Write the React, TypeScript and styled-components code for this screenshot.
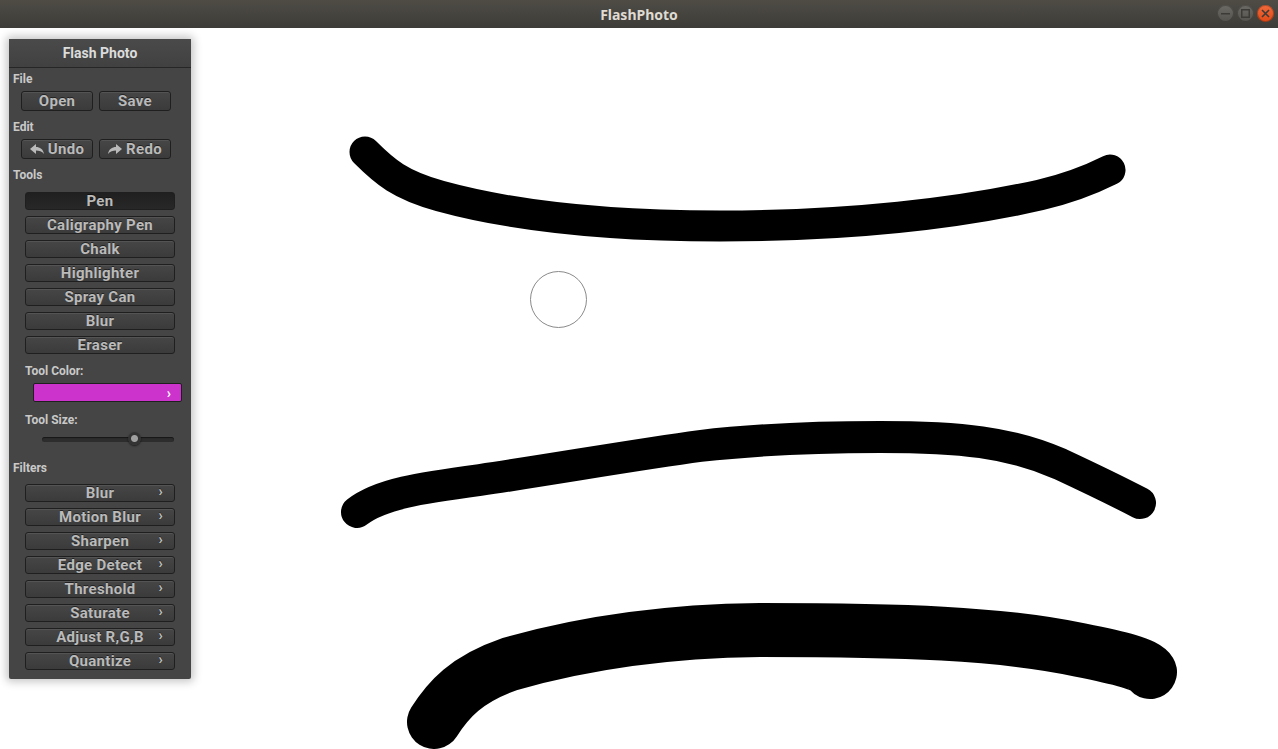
import styled, { createGlobalStyle } from "styled-components";

const Global = createGlobalStyle`
  html, body {
    margin: 0;
    padding: 0;
    overflow: hidden;
  }
  body {
    font-family: Roboto, "Liberation Sans", sans-serif;
  }
`;

const Screen = styled.div`
  width: 1278px;
  height: 749px;
  display: flex;
  flex-direction: column;
`;

const TitleBar = styled.div`
  height: 28px;
  flex: none;
  display: flex;
  align-items: center;
  justify-content: center;
  position: relative;
  background: linear-gradient(#4f4c46, #3d3c38);
  color: #dfdbd2;
  font-family: "Noto Sans", "DejaVu Sans", sans-serif;
  font-weight: 700;
  font-size: 14px;
`;

const WindowButtons = styled.div`
  position: absolute;
  right: 4px;
  top: 5px;
  display: flex;
  gap: 3px;
`;

const WinBtn = styled.div<{ $close?: boolean }>`
  width: 17px;
  height: 17px;
  border-radius: 50%;
  display: flex;
  align-items: center;
  justify-content: center;
  background: ${(p) =>
    p.$close
      ? "linear-gradient(#f26a3c, #df4a16)"
      : "linear-gradient(#6d6b65, #54524d)"};
  box-shadow: inset 0 0 0 1px rgba(0, 0, 0, 0.25);
`;

const Canvas = styled.div`
  flex: 1;
  position: relative;
  background: #ffffff;
  overflow: hidden;
`;

const Drawing = styled.svg`
  position: absolute;
  inset: 0;
`;

const Panel = styled.div`
  position: absolute;
  left: 9px;
  top: 11px;
  width: 182px;
  height: 640px;
  background: #454545;
  border-radius: 2px;
  box-shadow: 0 0 8px 3px rgba(0, 0, 0, 0.22);
  display: flex;
  flex-direction: column;
  color: #cfcfcf;
`;

const Header = styled.div`
  height: 28px;
  display: flex;
  align-items: center;
  justify-content: center;
  font-size: 14px;
  font-weight: 700;
  color: #dcdcdc;
  border-bottom: 1px solid #262626;
  background: linear-gradient(#4a4a4a, #414141);
`;

const SectionLabel = styled.div<{ $top: number; $indent?: number }>`
  height: 20px;
  line-height: 22px;
  margin-top: ${(p) => p.$top}px;
  padding-left: ${(p) => p.$indent ?? 4}px;
  font-size: 12px;
  font-weight: 700;
  color: #c9c9c9;
`;

const Row = styled.div`
  display: flex;
  gap: 6px;
  margin-top: 3px;
  padding-left: 12px;
`;

const Stack = styled.div<{ $top: number }>`
  display: flex;
  flex-direction: column;
  gap: 6px;
  margin-top: ${(p) => p.$top}px;
  padding-left: 16px;
`;

const Button = styled.div<{ $w: number; $h: number; $pushed?: boolean }>`
  position: relative;
  box-sizing: border-box;
  width: ${(p) => p.$w}px;
  height: ${(p) => p.$h}px;
  display: flex;
  align-items: center;
  justify-content: center;
  gap: 4px;
  border: 1px solid #1f1f1f;
  border-radius: 3px;
  background: ${(p) =>
    p.$pushed
      ? "linear-gradient(#202020, #282828)"
      : "linear-gradient(#464646, #3b3b3b)"};
  box-shadow: ${(p) =>
    p.$pushed ? "none" : "inset 0 1px 0 rgba(255, 255, 255, 0.08)"};
  color: #bababa;
  font-size: 15px;
  font-weight: 700;
  letter-spacing: 0.3px;
  text-shadow: 0 -1px 0 rgba(0, 0, 0, 0.5);
`;

const Chevron = styled.span`
  position: absolute;
  right: 11px;
  top: -2px;
  font-size: 14px;
  color: #c4c4c4;
`;

const ColorButton = styled.div`
  box-sizing: border-box;
  width: 149px;
  height: 19px;
  margin: 3px 0 0 24px;
  border: 1px solid #1f1f1f;
  border-radius: 2px;
  background: #cc33cc;
  display: flex;
  align-items: center;
  justify-content: flex-end;
  padding-right: 10px;
  color: #ffffff;
  font-size: 14px;
  font-weight: 700;
`;

const Slider = styled.div`
  position: relative;
  height: 20px;
  margin-left: 33px;
  width: 132px;
  display: flex;
  align-items: center;
`;

const Track = styled.div`
  width: 100%;
  height: 5px;
  border-radius: 3px;
  background: #2d2d2d;
  box-shadow: inset 0 1px 1px rgba(0, 0, 0, 0.5);
`;

const Thumb = styled.div`
  position: absolute;
  top: 3px;
  width: 13px;
  height: 13px;
  border-radius: 50%;
  background: radial-gradient(circle, #a0a0a0 0 3px, #333333 4px);
  box-shadow: 0 1px 2px rgba(0, 0, 0, 0.6);
`;

const Cursor = styled.div`
  position: absolute;
  left: 530px;
  top: 243px;
  width: 55px;
  height: 55px;
  border-radius: 50%;
  border: 1px solid #8a8a8a;
`;

const UndoIcon = () => (
  <svg width="14" height="11" viewBox="0 0 14 11">
    <path d="M0 5 L6 0 V3 C10 3 13 5 14 10 C12 7 9 6.5 6 6.5 V10 Z" fill="#bababa" />
  </svg>
);

const RedoIcon = () => (
  <svg width="14" height="11" viewBox="0 0 14 11">
    <path d="M14 5 L8 0 V3 C4 3 1 5 0 10 C2 7 5 6.5 8 6.5 V10 Z" fill="#bababa" />
  </svg>
);

const tools = ["Pen", "Caligraphy Pen", "Chalk", "Highlighter", "Spray Can", "Blur", "Eraser"];
const filters = [
  "Blur",
  "Motion Blur",
  "Sharpen",
  "Edge Detect",
  "Threshold",
  "Saturate",
  "Adjust R,G,B",
  "Quantize",
];

const strokes = [
  {
    d: "M365 152 C385 172 400 185 440 196 C520 218 620 226 720 226 C850 226 960 213 1040 195 C1070 188 1090 180 1110 170",
    w: 31,
  },
  {
    d: "M357 512 C380 494 420 488 480 480 C560 468 640 454 700 446 C760 439 820 437 880 437 C960 437 1010 442 1060 464 C1090 478 1115 490 1140 503",
    w: 32,
  },
  {
    d: "M434 722 C448 700 466 679 510 664 C580 644 660 631 760 630 C900 630 1000 633 1080 650 C1120 658 1145 664 1150 672",
    w: 54,
  },
];

export default function App() {
  return (
    <Screen>
      <Global />
      <TitleBar>
        FlashPhoto
        <WindowButtons>
          <WinBtn>
            <svg width="9" height="9" viewBox="0 0 9 9">
              <rect x="0" y="4" width="9" height="1.5" fill="#3c3b37" />
            </svg>
          </WinBtn>
          <WinBtn>
            <svg width="9" height="9" viewBox="0 0 9 9">
              <rect x="0.75" y="0.75" width="7.5" height="7.5" fill="none" stroke="#3c3b37" strokeWidth="1.5" />
            </svg>
          </WinBtn>
          <WinBtn $close>
            <svg width="9" height="9" viewBox="0 0 9 9">
              <path d="M1 1 L8 8 M8 1 L1 8" stroke="#3c3b37" strokeWidth="1.6" />
            </svg>
          </WinBtn>
        </WindowButtons>
      </TitleBar>
      <Canvas>
        <Drawing width="1278" height="721" viewBox="0 28 1278 721">
          {strokes.map((s, i) => (
            <path
              key={i}
              d={s.d}
              fill="none"
              stroke="#000"
              strokeWidth={s.w}
              strokeLinecap="round"
              strokeLinejoin="round"
            />
          ))}
        </Drawing>
        <Cursor />
        <Panel>
          <Header>Flash Photo</Header>
          <SectionLabel $top={0}>File</SectionLabel>
          <Row>
            <Button $w={72} $h={20}>Open</Button>
            <Button $w={72} $h={20}>Save</Button>
          </Row>
          <SectionLabel $top={5}>Edit</SectionLabel>
          <Row>
            <Button $w={72} $h={20}>
              <UndoIcon />
              Undo
            </Button>
            <Button $w={72} $h={20}>
              <RedoIcon />
              Redo
            </Button>
          </Row>
          <SectionLabel $top={5}>Tools</SectionLabel>
          <Stack $top={8}>
            {tools.map((t, i) => (
              <Button key={t} $w={150} $h={18} $pushed={i === 0}>
                {t}
              </Button>
            ))}
          </Stack>
          <SectionLabel $top={6} $indent={16}>Tool Color:</SectionLabel>
          <ColorButton>›</ColorButton>
          <SectionLabel $top={7} $indent={16}>Tool Size:</SectionLabel>
          <Slider>
            <Track />
            <Thumb style={{ left: `${0.695 * 132 - 6}px` }} />
          </Slider>
          <SectionLabel $top={8}>Filters</SectionLabel>
          <Stack $top={7}>
            {filters.map((f) => (
              <Button key={f} $w={150} $h={18}>
                {f}
                <Chevron>›</Chevron>
              </Button>
            ))}
          </Stack>
        </Panel>
      </Canvas>
    </Screen>
  );
}
